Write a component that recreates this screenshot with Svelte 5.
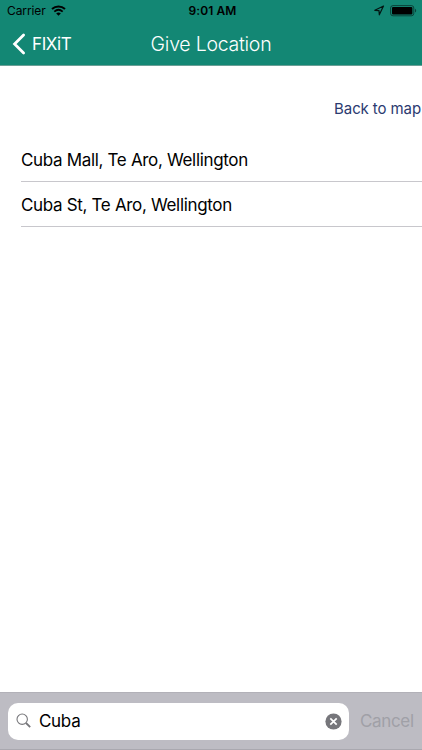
<script>
	let query = $state('Cuba');

	const results = ['Cuba Mall, Te Aro, Wellington', 'Cuba St, Te Aro, Wellington'];

	function clearQuery() {
		query = '';
	}
</script>

<div class="screen">
	<header>
		<div class="status-bar">
			<div class="carrier">
				<span>Carrier</span>
				<svg width="15" height="12" viewBox="0 0 15 12">
					<path d="M1 4.1C4.7.7 10.3.7 14 4.1" fill="none" stroke="#000" stroke-width="2" />
					<path d="M3.3 6.6c2.5-2.2 5.9-2.2 8.4 0" fill="none" stroke="#000" stroke-width="1.8" />
					<path d="M5.2 8.4c1.4-1.2 3.2-1.2 4.6 0L7.5 10.8z" />
				</svg>
			</div>
			<span class="time">9:01 AM</span>
			<div class="indicators">
				<svg width="11" height="12" viewBox="0 0 11 12">
					<path d="M9.5 1 .8 5.3l4.2.3.3 4.2z" fill="none" stroke="#000" stroke-opacity=".85" stroke-width="1.2" stroke-linejoin="round" />
				</svg>
				<svg width="27" height="12" viewBox="0 0 27 12">
					<rect x=".6" y=".6" width="23.2" height="10.2" rx="2.4" fill="none" stroke="#000" stroke-opacity=".5" />
					<rect x="2" y="2" width="20.4" height="7.4" rx="1" />
					<path d="M25 3.8c1.6.5 1.6 3.3 0 3.8z" opacity=".5" />
				</svg>
			</div>
		</div>
		<nav>
			<button class="back">
				<svg width="14" height="22" viewBox="0 0 14 22">
					<path d="M11.6 2 2.6 11l9 9" fill="none" stroke="#fff" stroke-width="2.8" stroke-linecap="round" />
				</svg>
				<span>FIXiT</span>
			</button>
			<h1>Give Location</h1>
		</nav>
	</header>

	<main>
		<button class="map-link">Back to map</button>
		<ul>
			{#each results as result}
				<li>{result}</li>
			{/each}
		</ul>
	</main>

	<footer>
		<label class="search">
			<svg width="17" height="17" viewBox="0 0 17 17">
				<circle cx="6.2" cy="6.2" r="5.2" fill="none" stroke="#77777b" stroke-width="1.1" />
				<path d="m10 10 4.2 4.2" stroke="#77777b" stroke-width="1.8" />
			</svg>
			<input type="text" bind:value={query} aria-label="Search" />
			<button class="clear" onclick={clearQuery} aria-label="Clear">
				<svg width="17" height="17" viewBox="0 0 17 17">
					<circle cx="8.5" cy="8.5" r="8.1" fill="#76767b" />
					<path d="m5.3 5.3 6.4 6.4M11.7 5.3l-6.4 6.4" stroke="#fff" stroke-width="1.7" />
				</svg>
			</button>
		</label>
		<button class="cancel">Cancel</button>
	</footer>
</div>

<style>
	:global(body) {
		margin: 0;
	}

	.screen {
		display: flex;
		flex-direction: column;
		height: 750px;
		width: 422px;
		overflow: hidden;
		background: #fff;
		color: #000;
		font-family: Inter, 'Liberation Sans', sans-serif;
	}

	button {
		padding: 0;
		border: 0;
		background: none;
		font: inherit;
		white-space: nowrap;
	}

	svg {
		display: block;
		flex: none;
	}

	header {
		box-sizing: border-box;
		height: 66px;
		background: #138774;
		border-bottom: 1px solid #6a9f96;
	}

	.status-bar {
		display: grid;
		grid-template-columns: 1fr auto 1fr;
		align-items: center;
		height: 22px;
		padding: 0 5px 0 7px;
		font-size: 12px;
		line-height: 22px;
	}

	.carrier {
		display: flex;
		align-items: center;
		gap: 5px;
		letter-spacing: -0.1px;
	}

	.time {
		padding-left: 1px;
		font-weight: 600;
		letter-spacing: 0.1px;
	}

	.indicators {
		display: flex;
		align-items: center;
		justify-content: flex-end;
		gap: 5px;
	}

	nav {
		display: grid;
		grid-template-columns: 1fr auto 1fr;
		align-items: center;
		height: 43px;
		padding: 0 12px;
		color: #fff;
	}

	.back {
		display: flex;
		align-items: center;
		gap: 6px;
		color: #fff;
		font-size: 17px;
		line-height: 22px;
		letter-spacing: -0.4px;
	}

	h1 {
		margin: 0;
		font-size: 19.5px;
		font-weight: 300;
		line-height: 24px;
		letter-spacing: -0.25px;
	}

	main {
		flex: 1;
	}

	.map-link {
		display: block;
		margin: 32px 1px 0 auto;
		color: #2b3a70;
		font-size: 15px;
		line-height: 22px;
		letter-spacing: -0.1px;
	}

	ul {
		list-style: none;
		margin: 17px 0 0;
		padding: 0 0 0 21px;
	}

	li {
		box-sizing: border-box;
		height: 45px;
		border-bottom: 1px solid #c8c7cc;
		font-size: 17px;
		line-height: 46px;
		letter-spacing: -0.33px;
	}

	footer {
		box-sizing: border-box;
		display: flex;
		align-items: center;
		height: 58px;
		padding: 0 8px;
		background: #bdbcc3;
		border-top: 1px solid #b2b1b8;
		border-bottom: 1px solid #a9a8af;
	}

	.search {
		box-sizing: border-box;
		display: flex;
		flex: none;
		align-items: center;
		width: 341px;
		height: 37px;
		padding: 0 7px 0 8px;
		border-radius: 10px;
		background: #fff;
	}

	input {
		flex: 1;
		min-width: 0;
		margin: 0;
		padding: 0 0 0 6px;
		border: 0;
		outline: 0;
		background: none;
		color: #000;
		font: inherit;
		font-size: 17px;
		letter-spacing: -0.3px;
	}

	.cancel {
		margin-left: 11px;
		color: #a0a0a7;
		font-size: 17px;
		letter-spacing: -0.35px;
	}
</style>
